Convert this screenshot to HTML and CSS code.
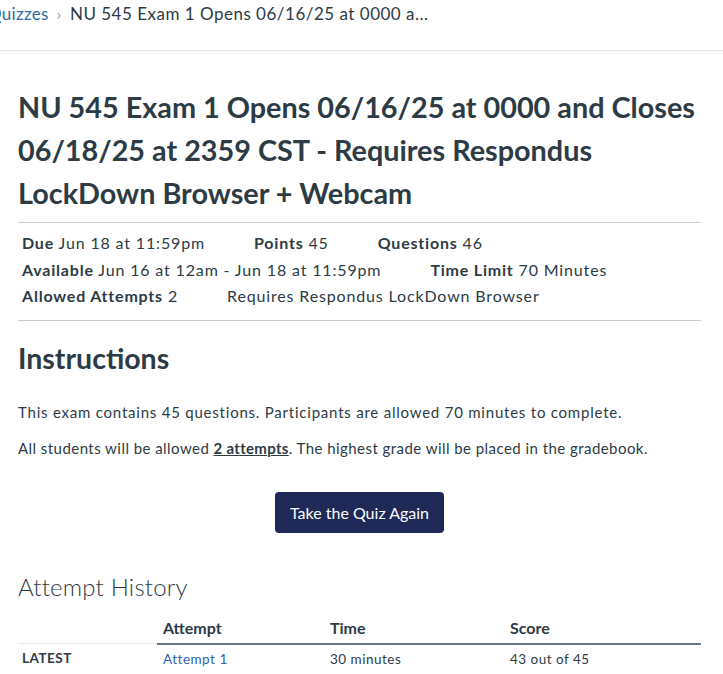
FILE: index.html
```html
<!DOCTYPE html>
<html>
<head>
<meta charset="utf-8">
<link rel="stylesheet" href="styles.css">
</head>
<body>
<nav class="crumbs">
  <a class="crumb-link" href="#">Quizzes</a>
  <span class="sep">&#8250;</span>
  <span class="crumb-cur">NU 545 Exam 1 Opens 06/16/25 at 0000 a...</span>
</nav>
<main class="content">
  <h1 class="title">NU 545 Exam 1 Opens 06/16/25 at 0000 and Closes 06/18/25 at 2359 CST - Requires Respondus LockDown Browser + Webcam</h1>
  <section class="details">
    <div class="drow">
      <span class="item"><b>Due</b> Jun 18 at 11:59pm</span>
      <span class="item"><b>Points</b> 45</span>
      <span class="item"><b>Questions</b> 46</span>
    </div>
    <div class="drow">
      <span class="item"><b>Available</b> Jun 16 at 12am - Jun 18 at 11:59pm</span>
      <span class="item"><b>Time Limit</b> 70 Minutes</span>
    </div>
    <div class="drow">
      <span class="item"><b>Allowed Attempts</b> 2</span>
      <span class="item">Requires Respondus LockDown Browser</span>
    </div>
  </section>
  <h2 class="instr">Instructions</h2>
  <p class="para para-a">This exam contains 45 questions. Participants are allowed 70 minutes to complete.</p>
  <p class="para para-b">All students will be allowed <u class="strong">2 attempts</u>. The highest grade will be placed in the gradebook.</p>
  <div class="btnwrap"><button class="btn">Take the Quiz Again</button></div>
  <h3 class="hist">Attempt History</h3>
  <table class="tbl">
    <thead>
      <tr><th class="c0"></th><th class="c1">Attempt</th><th class="c2">Time</th><th class="c3">Score</th></tr>
    </thead>
    <tbody>
      <tr><td class="c0 latest">LATEST</td><td class="c1"><a class="alink" href="#">Attempt 1</a></td><td class="c2">30 minutes</td><td class="c3">43 out of 45</td></tr>
    </tbody>
  </table>
</main>
</body>
</html>
```
FILE: styles.css
```css
* { box-sizing: border-box; }
html, body { margin: 0; padding: 0; background: #fff; }
body {
  font-family: Lato, "Open Sans", sans-serif;
  color: #2d3b45;
  width: 723px;
  overflow: hidden;
}
.crumbs {
  height: 51px;
  border-bottom: 1px solid #e3e5e7;
  display: flex;
  align-items: flex-start;
  padding-top: 4px;
  font-size: 17px;
  line-height: 20px;
  white-space: nowrap;
  margin-left: -12px;
  position: relative;
}
.crumbs::after {
  content: "";
  position: absolute;
  left: 0; right: 0; bottom: -5px;
  height: 4px;
  background: #fbfbfb;
}
.crumb-link { color: #2d6ba8; text-decoration: none; letter-spacing: 0.3px; }
.sep { color: #8b969e; margin: 0 9px 0 8px; font-size: 15px; }
.crumb-cur { color: #2d3b45; letter-spacing: 0.5px; }
.content {
  padding: 0 22px 0 18px;
}
.title {
  margin: 35px 0 0 0;
  font-size: 28.8px;
  line-height: 43px;
  font-weight: 700;
  padding-bottom: 7px;
  border-bottom: 1px solid #c7cdd1;
}
.details {
  padding: 7px 0 10px 4px;
  border-bottom: 1px solid #c7cdd1;
  font-size: 16px;
  line-height: 26.5px;
  letter-spacing: 0.85px;
}
.drow { display: flex; gap: 49px; }
.item b { font-weight: 700; letter-spacing: 0.8px; }
.instr {
  margin: 17px 0 0 0;
  font-size: 28.5px;
  line-height: 40px;
  font-weight: 700;
}
.para {
  margin: 24px 0 0 0;
  font-size: 15px;
  line-height: 20px;
}
.para-a { letter-spacing: 0.78px; }
.para-b { letter-spacing: 0.45px; }
.para + .para { margin-top: 16px; }
.strong { font-weight: 700; letter-spacing: 0.3px; }
.btnwrap {
  display: flex;
  justify-content: center;
  margin-top: 34px;
}
.btn {
  background: #1e2957;
  color: #fff;
  font-family: Lato, sans-serif;
  font-size: 16px;
  border: none;
  border-radius: 4px;
  height: 41px;
  padding: 0 15px;
}
.hist {
  margin: 38px 0 0 0;
  font-size: 24px;
  line-height: 32px;
  font-weight: 300;
  letter-spacing: 0.2px;
}
.tbl {
  width: 100%;
  border-collapse: collapse;
  margin-top: 9px;
  font-size: 16px;
}
.tbl th {
  text-align: left;
  font-weight: 700;
  padding: 6px 0 5px 0;
  border-bottom: 2px solid #6b7780;
  line-height: 20px;
}
.tbl th.c0 { border-bottom: 1px solid #e6e9eb; }
.tbl td {
  font-size: 13.5px;
  padding: 5px 0 6px 0;
  line-height: 18px;
  letter-spacing: 0.5px;
}
.c0 { width: 139px; padding-left: 4px !important; }
.c1 { width: 173px; padding-left: 6px !important; }
.c2 { width: 180px; }
.latest { font-weight: 700; }
.alink { color: #2b64a8; text-decoration: none; }
```
